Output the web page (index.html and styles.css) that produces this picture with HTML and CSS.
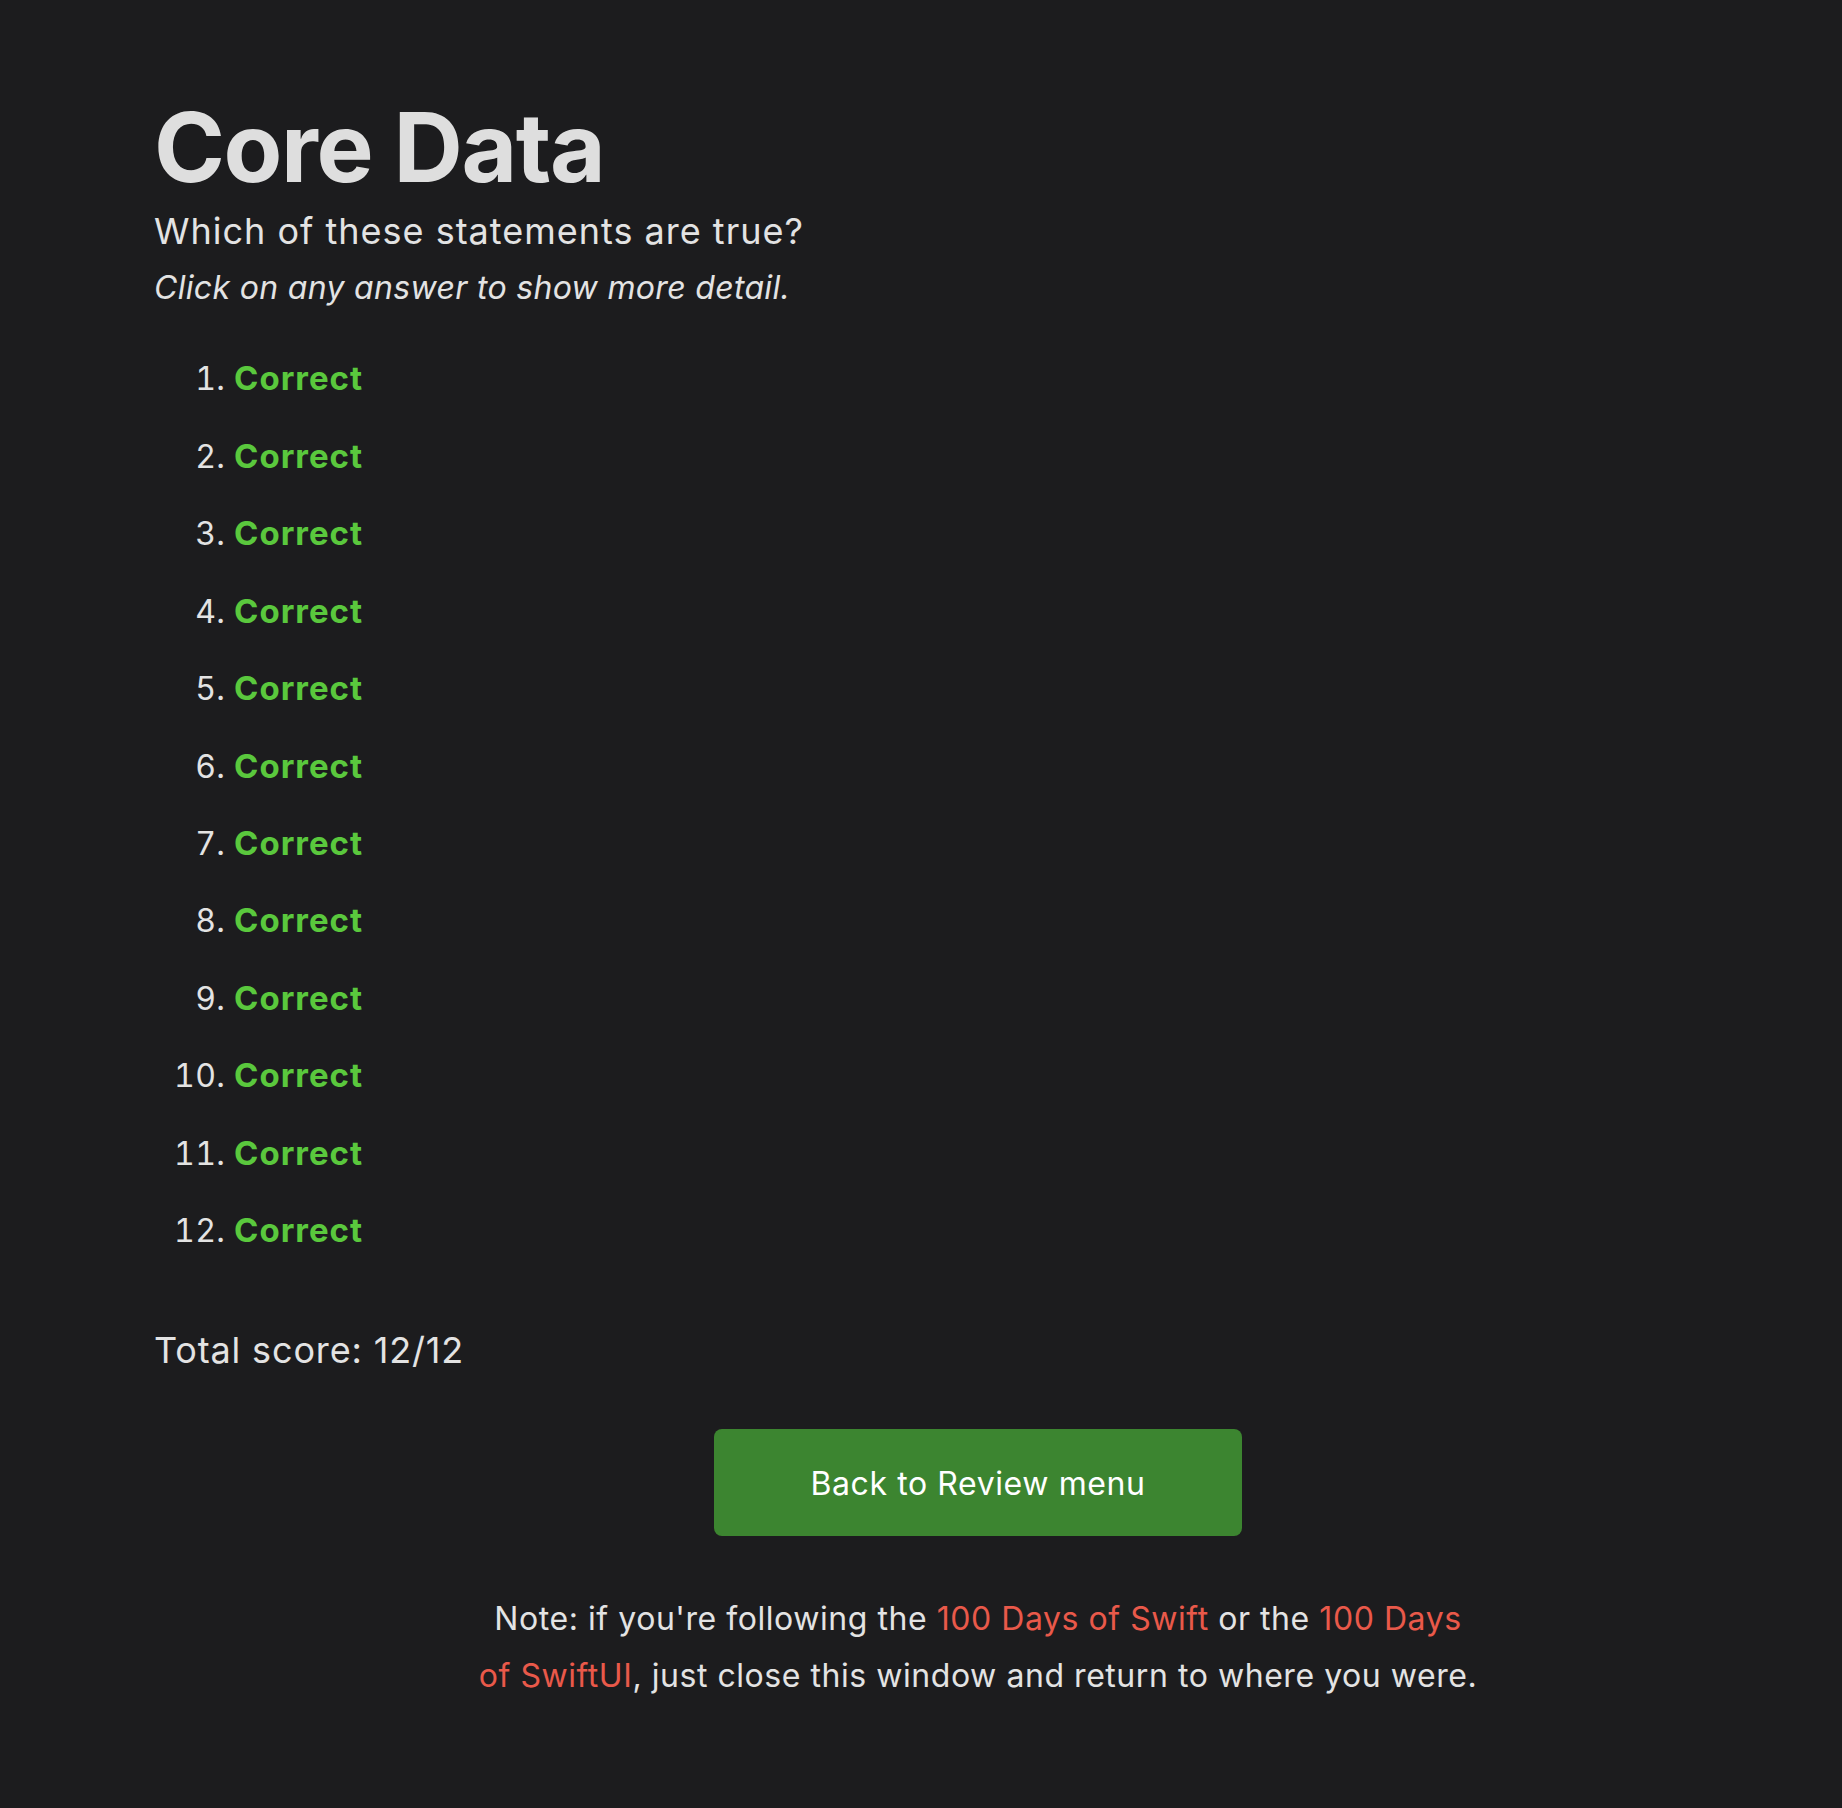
FILE: index.html
```html
<!DOCTYPE html>
<html lang="en">
<head>
<meta charset="utf-8">
<title>Core Data</title>
<link rel="stylesheet" href="styles.css">
</head>
<body>
<main class="page">
  <h1 class="title">Core Data</h1>
  <p class="question">Which of these statements are true?</p>
  <p class="hint">Click on any answer to show more detail.</p>
  <ol class="answers">
    <li><span class="correct">Correct</span></li>
    <li><span class="correct">Correct</span></li>
    <li><span class="correct">Correct</span></li>
    <li><span class="correct">Correct</span></li>
    <li><span class="correct">Correct</span></li>
    <li><span class="correct">Correct</span></li>
    <li><span class="correct">Correct</span></li>
    <li><span class="correct">Correct</span></li>
    <li><span class="correct">Correct</span></li>
    <li><span class="correct">Correct</span></li>
    <li><span class="correct">Correct</span></li>
    <li><span class="correct">Correct</span></li>
  </ol>
  <p class="score">Total score: 12/12</p>
  <div class="actions">
    <a class="button" href="#">Back to Review menu</a>
  </div>
  <p class="note">Note: if you're following the <a class="link" href="#">100 Days of Swift</a> or the <a class="link" href="#">100 Days of SwiftUI</a>, just close this window and return to where you were.</p>
</main>
</body>
</html>
```
FILE: styles.css
```css
html, body {
  margin: 0;
  padding: 0;
  background: #1c1c1e;
}

body {
  font-family: Inter, "Noto Sans", "Liberation Sans", sans-serif;
  color: #e3e3e3;
  min-height: 1808px;
}

.page {
  padding: 98.8px 40px 80px 154px;
  display: flex;
  flex-direction: column;
}

.title {
  margin: 0;
  font-size: 96px;
  line-height: 96px;
  font-weight: 700;
  color: #dedede;
  letter-spacing: -1.4px;
}

.question {
  margin: 15.5px 0 0;
  font-size: 36px;
  line-height: 43.2px;
  font-weight: 400;
  letter-spacing: 1px;
}

.hint {
  margin: 10.2px 0 0;
  font-size: 32px;
  line-height: 48px;
  font-style: italic;
  letter-spacing: 0.32px;
}

.answers {
  margin: 28.6px 0 0;
  padding: 0 0 0 80px;
  font-size: 32px;
  line-height: 77.45px;
  letter-spacing: 0.3px;
}

.answers li {
  margin: 0;
}

.correct {
  color: #5ac83d;
  font-weight: 700;
  font-size: 33px;
  letter-spacing: 1px;
}

.score {
  margin: 52.9px 0 0;
  font-size: 36px;
  line-height: 54px;
  letter-spacing: 0.85px;
}

.actions {
  margin-top: 52.4px;
  display: flex;
  justify-content: center;
}

.button {
  display: block;
  width: 527.7px;
  box-sizing: border-box;
  padding: 30.5px 0 28.2px;
  background: #3c8530;
  color: #ffffff;
  border-radius: 8px;
  text-align: center;
  text-decoration: none;
  font-size: 32px;
  line-height: 48px;
  letter-spacing: 0.6px;
}

.note {
  align-self: center;
  max-width: 1000px;
  margin: 53.9px 0 0;
  font-size: 32px;
  line-height: 57.6px;
  text-align: center;
  letter-spacing: 0.55px;
}

.link {
  color: #e9594a;
  text-decoration: none;
}
```
